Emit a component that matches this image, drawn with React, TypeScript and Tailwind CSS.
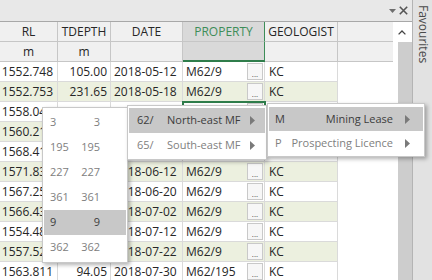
import clsx from "clsx";

// cells that sit fully under the open menus are left blank
const rows = [
  ["1552.748", "105.00", "2018-05-12", "M62/9", "KC"],
  ["1552.753", "231.65", "2018-05-18", "M62/9", "KC"],
  ["1558.046", "", "", "", ""],
  ["1560.215", "", "", "", ""],
  ["1568.412", "", "", "", ""],
  ["1571.833", "", "2018-06-12", "M62/9", "KC"],
  ["1567.254", "", "2018-06-20", "M62/9", "KC"],
  ["1566.437", "", "2018-07-02", "M62/9", "KC"],
  ["1554.489", "", "2018-07-12", "M62/9", "KC"],
  ["1557.526", "", "2018-07-22", "M62/9", "KC"],
  ["1563.811", "94.05", "2018-07-30", "M62/195", "KC"],
];

const blocks = [
  ["3", "3"],
  ["195", "195"],
  ["227", "227"],
  ["361", "361"],
  ["9", "9"],
  ["362", "362"],
];

const regions = [
  ["62/", "North-east MF"],
  ["65/", "South-east MF"],
];

const tenures = [
  ["M", "Mining Lease"],
  ["P", "Prospecting Licence"],
];

function Arrow() {
  return (
    <svg width="5" height="9" viewBox="0 0 5 9" className="shrink-0">
      <path d="M0 0L5 4.5L0 9Z" fill="#7a7a7a" />
    </svg>
  );
}

export default function App() {
  return (
    <div className="relative flex h-[280px] w-[432px] overflow-hidden bg-white font-['Open_Sans',sans-serif] text-[12px] text-[#262626]">
      <div className="flex w-[413px] shrink-0 flex-col border-r border-[#b4b4b4]">
        {/* title strip */}
        <div className="flex h-[22px] shrink-0 items-center justify-end gap-[3px] border-b border-[#a8a8a8] bg-[#e8e8e8] pr-[4px]">
          <svg width="7" height="4" viewBox="0 0 7 4">
            <path d="M0 0H7L3.5 4Z" fill="#6e6e6e" />
          </svg>
          <svg width="9" height="9" viewBox="0 0 9 9">
            <path d="M0.8 0.8L8.2 8.2M8.2 0.8L0.8 8.2" stroke="#555" strokeWidth="1.6" />
          </svg>
        </div>

        <div className="flex min-h-0 flex-1">
          <div className="flex min-w-0 flex-1 flex-col">
            {/* header */}
            <div className="flex h-[20px] shrink-0 bg-[#f0f0f0]">
              <div className="flex w-[58px] items-center justify-center border-r border-b border-[#c6c6c6]">RL</div>
              <div className="flex w-[53px] items-center justify-center border-r border-b border-[#c6c6c6]">TDEPTH</div>
              <div className="flex w-[72px] items-center justify-center border-r border-b border-[#c6c6c6]">DATE</div>
              <div className="flex w-[82px] items-center justify-center border-r border-b border-r-[#3d8d58] border-b-[#c6c6c6] bg-[#d9d9d9] text-[#3d8d58]">
                PROPERTY
              </div>
              <div className="flex w-[73px] items-center justify-center border-r border-b border-[#c6c6c6]">GEOLOGIST</div>
              <div className="flex-1 border-b border-[#c6c6c6]" />
            </div>

            {/* units */}
            <div className="flex h-[20px] shrink-0 bg-[#f0f0f0]">
              <div className="flex w-[58px] items-center justify-center border-r border-b border-[#c6c6c6]">m</div>
              <div className="flex w-[53px] items-center justify-center border-r border-b border-[#c6c6c6]">m</div>
              <div className="w-[72px] border-r border-b border-[#c6c6c6]" />
              <div className="w-[82px] border-r border-b-2 border-r-[#3d8d58] border-b-[#2f7d4b] bg-[#d9d9d9]" />
              <div className="w-[73px] border-r border-b border-[#c6c6c6]" />
              <div className="flex-1 border-b border-[#c6c6c6]" />
            </div>

            {rows.map((r, i) => (
              <div key={i} className="flex h-[20px] shrink-0">
                <div className={clsx("flex w-[338px]", i % 2 ? "bg-[#ecf0df]" : "bg-white")}>
                  <div className="flex w-[58px] items-center justify-end overflow-hidden whitespace-nowrap border-r border-b border-[#dadada] pr-[4px]">
                    {r[0]}
                  </div>
                  <div className="flex w-[53px] items-center justify-end overflow-hidden whitespace-nowrap border-r border-b border-[#dadada] pr-[3px]">
                    {r[1]}
                  </div>
                  <div className="flex w-[72px] items-center overflow-hidden whitespace-nowrap border-r border-b border-[#dadada] pl-[3px]">
                    {r[2]}
                  </div>
                  <div
                    className={clsx(
                      "flex w-[82px] items-stretch border-r border-b border-[#dadada] pl-[3px]",
                      i === 2 && "outline-2 -outline-offset-1 outline-[#2f7d4b]",
                    )}
                  >
                    <span className="flex flex-1 items-center">{r[3]}</span>
                    <div className="my-[1px] mr-[1px] flex w-[16px] items-end justify-center border border-[#c9c9c9] bg-[#f7f7f7] pb-[1px] text-[8px] leading-none text-[#444]">
                      ...
                    </div>
                  </div>
                  <div className="flex w-[73px] items-center border-r border-b border-[#dadada] pl-[4px]">
                    {r[4]}
                  </div>
                </div>
                <div className="flex-1 bg-white" />
              </div>
            ))}
          </div>

          {/* scrollbar */}
          <div className="flex w-[19px] shrink-0 flex-col">
            <div className="flex h-[20px] shrink-0 items-center pl-[5px]">
              <svg width="8" height="5" viewBox="0 0 8 5">
                <path d="M0.6 4.4L4 1L7.4 4.4" stroke="#444" strokeWidth="1.3" fill="none" />
              </svg>
            </div>
            <div className="ml-[5px] flex-1 bg-[#cdcdcd]" />
          </div>
        </div>
      </div>

      {/* favourites tab */}
      <div className="flex flex-1 justify-center bg-[#e2e2e2] pt-[5px]">
        <span className="text-[#4a4a4a] [writing-mode:vertical-rl]">Favourites</span>
      </div>

      {/* drill-down menus */}
      <div className="absolute left-[42px] top-[107px] w-[86px] border border-[#c8c8c8] bg-white px-[1px] py-[2px] text-[11px] text-[#808080] shadow-[2px_2px_4px_rgba(0,0,0,0.3)]">
        {blocks.map(([a, b]) => (
          <div key={a} className={clsx("flex h-[25px] items-center pl-[6px]", a === "9" && "bg-[#c8c8c8] text-[#3c3c3c]")}>
            <span className="w-[28px]">{a}</span>
            <span className="w-[22px] text-right">{b}</span>
          </div>
        ))}
      </div>

      <div className="absolute left-[127px] top-[105px] w-[140px] border border-[#c8c8c8] bg-white px-[1px] pt-[2px] pb-[1px] text-[11px] text-[#808080] shadow-[2px_2px_4px_rgba(0,0,0,0.3)]">
        {regions.map(([a, b], i) => (
          <div key={a} className={clsx("flex h-[25px] items-center whitespace-nowrap pl-[8px] pr-[10px]", i === 0 && "bg-[#c8c8c8] text-[#3c3c3c]")}>
            <span className="w-[30px]">{a}</span>
            <span className="flex-1">{b}</span>
            <Arrow />
          </div>
        ))}
      </div>

      <div className="absolute left-[267px] top-[103px] w-[158px] border border-[#c8c8c8] bg-white px-[1px] pt-[3px] pb-[1px] text-[11px] text-[#808080] shadow-[2px_2px_4px_rgba(0,0,0,0.3)]">
        {tenures.map(([a, b], i) => (
          <div key={a} className={clsx("flex h-[24px] items-center whitespace-nowrap pl-[6px] pr-[13px]", i === 0 && "bg-[#c8c8c8] text-[#3c3c3c]")}>
            <span className="w-[16px] shrink-0">{a}</span>
            <span className="flex-1 text-right">{b}</span>
            <span className="ml-[12px] flex shrink-0">
              <Arrow />
            </span>
          </div>
        ))}
      </div>
    </div>
  );
}
